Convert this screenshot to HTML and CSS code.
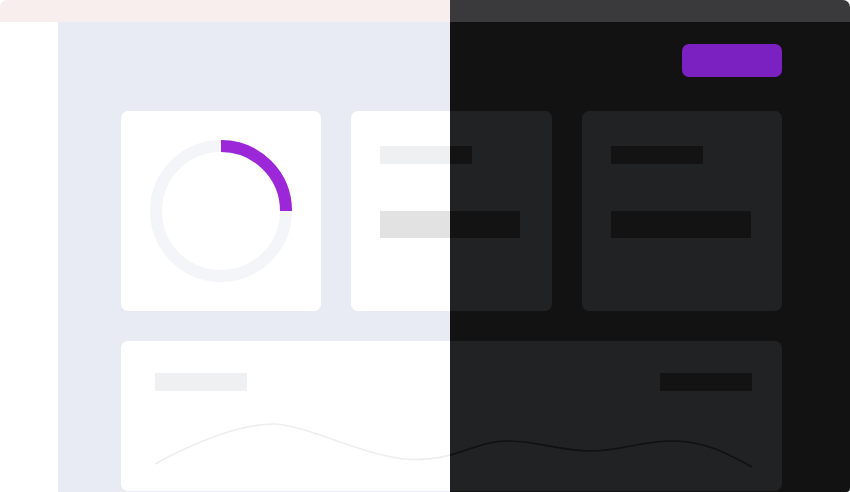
FILE: index.html
```html
<!DOCTYPE html>
<html lang="en">
<head>
<meta charset="utf-8">
<title>Theme preview</title>
<link rel="stylesheet" href="styles.css">
</head>
<body>
<div class="stage">
  <div class="frame light">
    <div class="topbar"></div>
    <div class="body">
      <aside class="sidebar"></aside>
      <main class="main">
        <div class="toolbar"><div class="button"></div></div>
        <div class="cards">
          <div class="card donut-card">
            <svg class="donut" width="142" height="142" viewBox="0 0 142 142">
              <circle class="track" cx="71" cy="71" r="65" fill="none" stroke-width="12"/>
              <path class="arc" d="M71 6 A65 65 0 0 1 136 71" fill="none" stroke-width="12"/>
            </svg>
          </div>
          <div class="card stat-card"><div class="bar bar-sm"></div><div class="bar bar-lg"></div></div>
          <div class="card stat-card"><div class="bar bar-sm"></div><div class="bar bar-lg"></div></div>
        </div>
        <div class="card chart-card">
          <div class="chart-head"><div class="bar bar-sm"></div><div class="bar bar-sm bar-alt"></div></div>
          <svg class="wave" width="597" height="50" viewBox="0 0 597 50">
            <path d="M0 44 C40 22 85 4 118 4 S215 39.5 260 39.5 S320 21 352 21 S405 31 435 31 S485 21 518 21 S575 35 597 47" fill="none" stroke-width="1.6"/>
          </svg>
        </div>
      </main>
    </div>
  </div>
  <div class="frame dark">
    <div class="topbar"></div>
    <div class="body">
      <aside class="sidebar"></aside>
      <main class="main">
        <div class="toolbar"><div class="button"></div></div>
        <div class="cards">
          <div class="card donut-card">
            <svg class="donut" width="142" height="142" viewBox="0 0 142 142">
              <circle class="track" cx="71" cy="71" r="65" fill="none" stroke-width="12"/>
              <path class="arc" d="M71 6 A65 65 0 0 1 136 71" fill="none" stroke-width="12"/>
            </svg>
          </div>
          <div class="card stat-card"><div class="bar bar-sm"></div><div class="bar bar-lg"></div></div>
          <div class="card stat-card"><div class="bar bar-sm"></div><div class="bar bar-lg"></div></div>
        </div>
        <div class="card chart-card">
          <div class="chart-head"><div class="bar bar-sm"></div><div class="bar bar-sm bar-alt"></div></div>
          <svg class="wave" width="597" height="50" viewBox="0 0 597 50">
            <path d="M0 44 C40 22 85 4 118 4 S215 39.5 260 39.5 S320 21 352 21 S405 31 435 31 S485 21 518 21 S575 35 597 47" fill="none" stroke-width="1.6"/>
          </svg>
        </div>
      </main>
    </div>
  </div>
</div>
</body>
</html>
```
FILE: styles.css
```css
* { box-sizing: border-box; }
html, body { margin: 0; padding: 0; background: #ffffff; }
body { font-family: "Liberation Sans", Arial, sans-serif; }

.stage { position: relative; width: 850px; height: 492px; }

.frame {
  width: 850px;
  height: 492px;
  border-radius: 7px 7px 4px 4px;
  overflow: hidden;
  display: flex;
  flex-direction: column;
}
.frame.dark {
  position: absolute;
  top: 0;
  left: 0;
  clip-path: inset(0 0 0 450px);
}

.topbar { height: 22px; flex: none; }
.body { flex: 1; display: flex; min-height: 0; }
.sidebar { width: 58px; flex: none; }
.main {
  flex: 1;
  padding: 22px 68px 0 63px;
  display: flex;
  flex-direction: column;
  overflow: hidden;
}

.toolbar { display: flex; justify-content: flex-end; }
.button { width: 100px; height: 33px; border-radius: 7px; background: #7b21c2; }

.cards {
  margin-top: 34px;
  display: grid;
  grid-template-columns: 1fr 1fr 1fr;
  column-gap: 30px;
}
.card { border-radius: 7px; }
.donut-card {
  height: 200px;
  display: flex;
  align-items: center;
  justify-content: center;
}
.stat-card {
  height: 200px;
  padding: 35px 29px 0;
  display: flex;
  flex-direction: column;
  align-items: flex-start;
}
.bar-sm { width: 92px; height: 18px; }
.bar-lg { width: 140px; height: 27px; margin-top: 47px; }

.chart-card {
  margin-top: 30px;
  height: 150px;
  flex: none;
  padding: 32px 30px 0 34px;
}
.chart-head { display: flex; justify-content: space-between; }
.wave { display: block; margin-top: 29px; }

.arc { stroke: #9b27d9; stroke-linecap: butt; }

/* light theme */
.light .topbar { background: #f9eeee; }
.light .sidebar { background: #ffffff; }
.light .main { background: #e8eaf4; }
.light .card { background: #ffffff; }
.light .bar-sm { background: #eff0f1; }
.light .bar-lg { background: #e2e2e2; }
.light .track { stroke: #f4f5f8; }
.light .wave path { stroke: #eeeeef; }

/* dark theme */
.dark .topbar { background: #3a393c; }
.dark .sidebar { background: #121212; }
.dark .main { background: #121212; }
.dark .card { background: #212224; }
.dark .bar-sm, .dark .bar-lg { background: #131313; }
.dark .track { stroke: #2a2b2d; }
.dark .wave path { stroke: #111111; }
```
